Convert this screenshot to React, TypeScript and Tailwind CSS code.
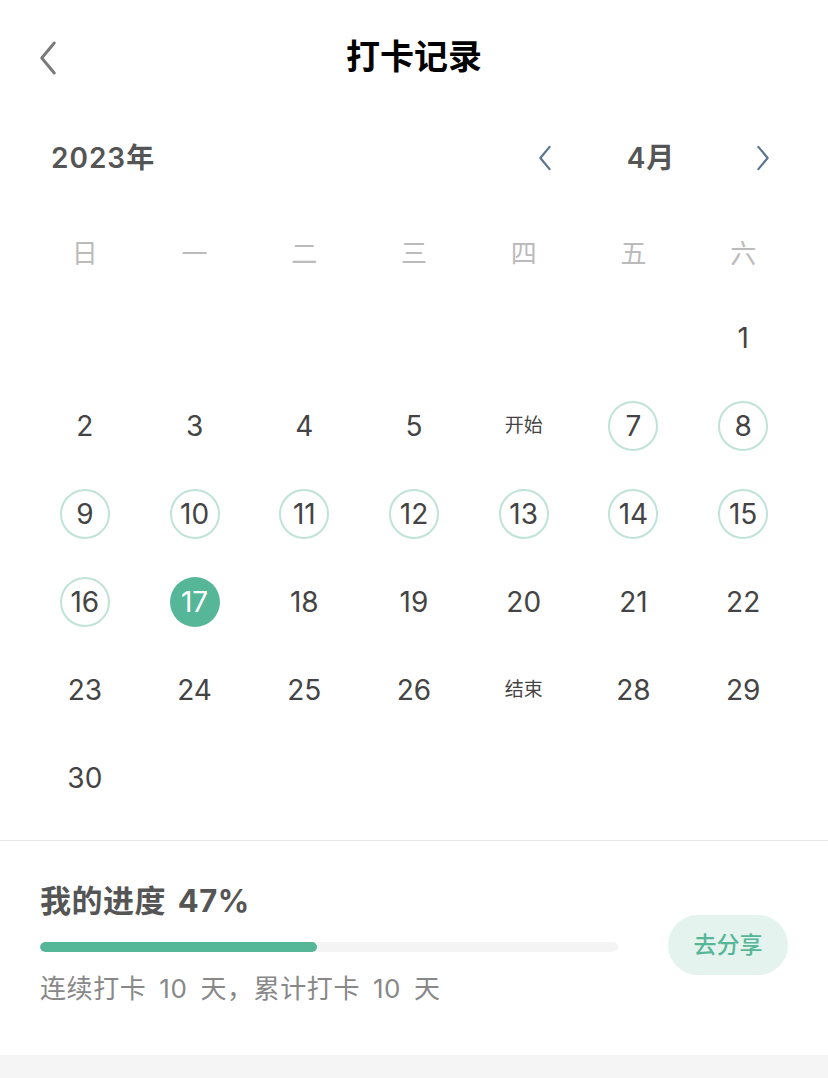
import React from 'react';

const WEEK = ['日', '一', '二', '三', '四', '五', '六'];

type Day = { label: string; kind?: 'ring' | 'fill' | 'small' };

const days: (Day | null)[] = [
  null, null, null, null, null, null,
  { label: '1' },
  { label: '2' }, { label: '3' }, { label: '4' }, { label: '5' },
  { label: '开始', kind: 'small' },
  { label: '7', kind: 'ring' }, { label: '8', kind: 'ring' },
  { label: '9', kind: 'ring' }, { label: '10', kind: 'ring' }, { label: '11', kind: 'ring' },
  { label: '12', kind: 'ring' }, { label: '13', kind: 'ring' }, { label: '14', kind: 'ring' },
  { label: '15', kind: 'ring' },
  { label: '16', kind: 'ring' }, { label: '17', kind: 'fill' },
  { label: '18' }, { label: '19' }, { label: '20' }, { label: '21' }, { label: '22' },
  { label: '23' }, { label: '24' }, { label: '25' }, { label: '26' },
  { label: '结束', kind: 'small' },
  { label: '28' }, { label: '29' },
  { label: '30' },
];

const Chevron = ({ dir, className }: { dir: 'left' | 'right'; className: string }) => (
  <svg viewBox="0 0 16 28" className={className} fill="none" stroke="currentColor" strokeWidth="2.4" strokeLinecap="round" strokeLinejoin="round">
    {dir === 'left' ? <path d="M13 2 L3 14 L13 26" /> : <path d="M3 2 L13 14 L3 26" />}
  </svg>
);

export default function App() {
  return (
    <div className="w-[828px] h-[1078px] bg-white flex flex-col font-['Inter','Noto_Sans_CJK_SC',sans-serif] overflow-hidden">
      {/* 顶部导航 */}
      <div className="relative h-[116px] flex items-center justify-center shrink-0">
        <button className="absolute left-[38px] top-[40px] text-[#7a7a7a]">
          <Chevron dir="left" className="w-[20px] h-[36px]" />
        </button>
        <h1 className="text-[34px] font-bold text-black -mt-[3px]">打卡记录</h1>
      </div>

      {/* 年月 */}
      <div className="flex items-center justify-between pl-[51px] pr-[57px] h-[84px] shrink-0">
        <span className="text-[28px] font-semibold tracking-[1px] text-[#555]">2023年</span>
        <div className="flex items-center">
          <Chevron dir="left" className="w-[16px] h-[26px] text-[#5a7590]" />
          <span className="w-[202px] text-center text-[28px] font-semibold tracking-[1px] text-[#555] pr-[6px]">4月</span>
          <Chevron dir="right" className="w-[16px] h-[26px] text-[#5a7590]" />
        </div>
      </div>

      {/* 日历 */}
      <div className="px-[30px] shrink-0">
        <div className="grid grid-cols-7 h-[62px] mt-[22px] items-center">
          {WEEK.map((w) => (
            <div key={w} className="text-center text-[26px] text-[#bbbbbb]">{w}</div>
          ))}
        </div>
        <div className="grid grid-cols-7 auto-rows-[88px] mt-[10px]">
          {days.map((d, i) => (
            <div key={i} className="flex items-center justify-center">
              {d && (
                d.kind === 'small' ? (
                  <span className="text-[19px] text-[#444]">{d.label}</span>
                ) : (
                  <span
                    className={`w-[50px] h-[50px] rounded-full flex items-center justify-center text-[28px] ${
                      d.kind === 'fill'
                        ? 'bg-[#55b797] text-white'
                        : d.kind === 'ring'
                        ? 'border-2 border-[#bfe3d8] text-[#444]'
                        : 'text-[#444]'
                    }`}
                  >
                    {d.label}
                  </span>
                )
              )}
            </div>
          ))}
        </div>
      </div>

      <div className="flex-1" />
      <div className="h-px bg-[#e6e6e6] shrink-0" />

      {/* 进度 */}
      <div className="flex items-center pl-[40px] pr-[40px] h-[214px] shrink-0">
        <div className="w-[578px] -mt-[10px]">
          <div className="text-[31px] font-bold text-[#555] leading-none tracking-[0.5px] [word-spacing:4px]">我的进度 47%</div>
          <div className="mt-[26px] h-[10px] rounded-full bg-[#f4f4f4] overflow-hidden">
            <div className="h-full rounded-full bg-[#55b797]" style={{ width: '48%' }} />
          </div>
          <div className="mt-[24px] text-[26px] text-[#888] leading-none tracking-[0.6px] [word-spacing:5px]">连续打卡 10 天，累计打卡 10 天</div>
        </div>
        <div className="flex-1" />
        <button className="w-[120px] h-[60px] rounded-[30px] bg-[#e4f3ee] text-[#55b797] text-[23px] font-medium -mt-[6px]">
          去分享
        </button>
      </div>
      <div className="h-[23px] bg-[#f5f5f5] shrink-0" />
    </div>
  );
}
